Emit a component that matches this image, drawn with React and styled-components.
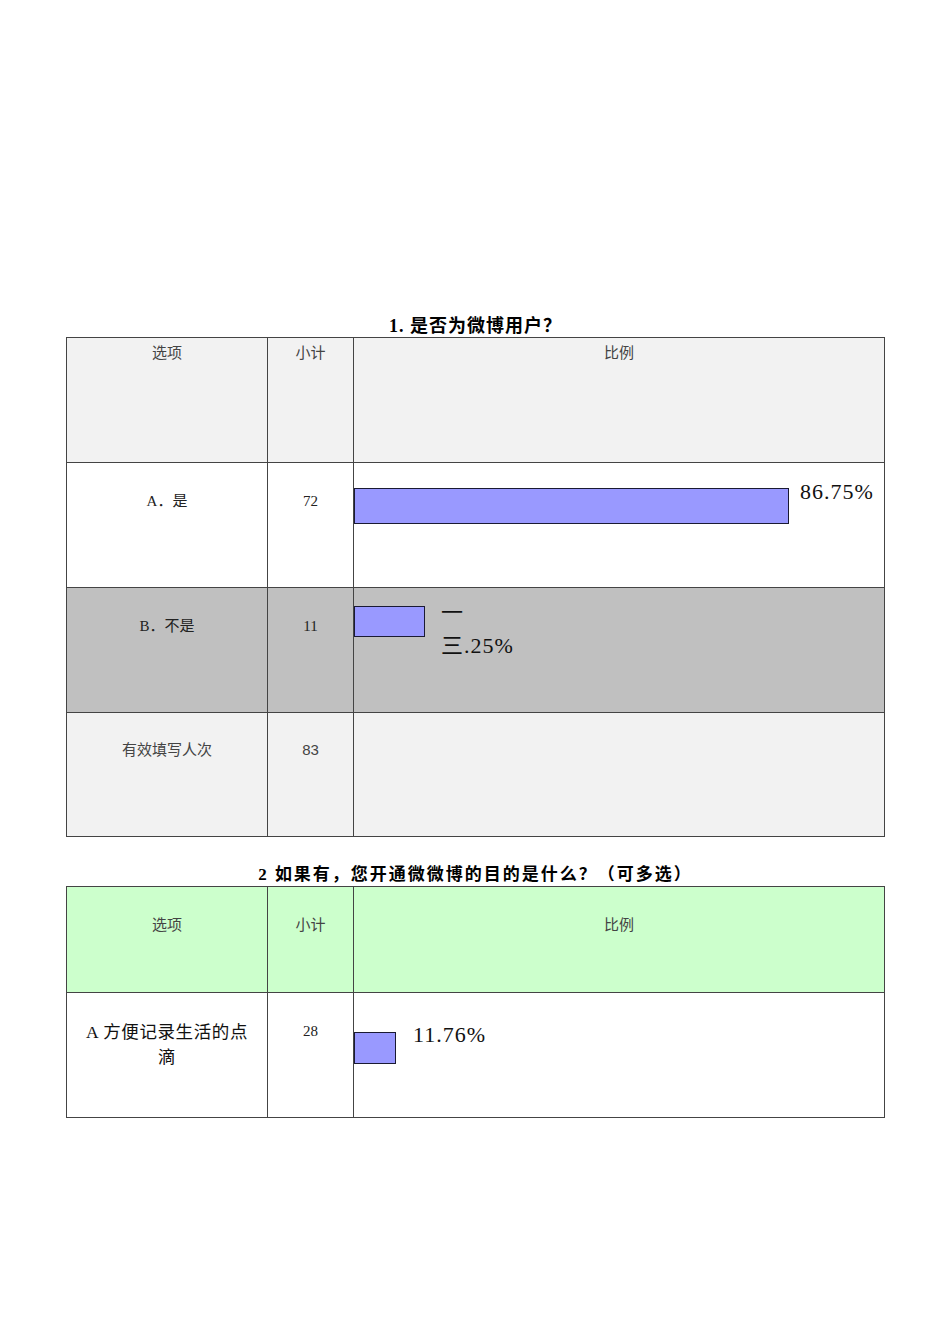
import React from 'react'
import styled, { createGlobalStyle } from 'styled-components'

const GlobalStyle = createGlobalStyle`
    body {
        margin: 0;
        background: #ffffff;
        font-family: 'Liberation Serif', 'Noto Sans CJK SC', serif;
        color: #000;
        text-spacing-trim: space-all;
    }
`

const q1 = [
    { label: 'A．是', count: '72', bg: '#ffffff', bar: 435, barH: 36, barTop: 25, gap: 11, pctTop: 12, pct: ['86.75%'] },
    { label: 'B．不是', count: '11', bg: '#c0c0c0', bar: 71, barH: 31, barTop: 18, gap: 16, pctTop: 8, pct: ['一', '三.25%'] },
]

const q2 = [
    { label: 'A 方便记录生活的点滴', big: true, count: '28', bg: '#ffffff', bar: 42, barH: 32, barTop: 39, gap: 17, pctTop: 25, pct: ['11.76%'] },
]

export default function App() {
    return (
        <Page>
            <GlobalStyle />
            <Title $size={18} $spacing={1}>1. 是否为微博用户？</Title>
            <Table>
                <colgroup>
                    <col style={{ width: 201 }} />
                    <col style={{ width: 86 }} />
                    <col />
                </colgroup>
                <tbody>
                    <Row $bg="#f2f2f2" $h={125}>
                        <HeadCell $pad={6}>选项</HeadCell>
                        <HeadCell $pad={6}>小计</HeadCell>
                        <HeadCell $pad={6}>比例</HeadCell>
                    </Row>
                    {q1.map((r) => (
                        <DataRow key={r.label} row={r} />
                    ))}
                    <Row $bg="#f2f2f2" $h={124}>
                        <HeadCell $pad={28}>有效填写人次</HeadCell>
                        <HeadCell $pad={28} $sans>83</HeadCell>
                        <Cell />
                    </Row>
                </tbody>
            </Table>

            <Title $size={17} $spacing={2} $gap={27}>2 如果有，您开通微微博的目的是什么？（可多选）</Title>
            <Table>
                <colgroup>
                    <col style={{ width: 201 }} />
                    <col style={{ width: 86 }} />
                    <col />
                </colgroup>
                <tbody>
                    <Row $bg="#ccffcc" $h={106}>
                        <HeadCell $pad={29}>选项</HeadCell>
                        <HeadCell $pad={29}>小计</HeadCell>
                        <HeadCell $pad={29}>比例</HeadCell>
                    </Row>
                    {q2.map((r) => (
                        <DataRow key={r.label} row={r} />
                    ))}
                </tbody>
            </Table>
        </Page>
    )
}

function DataRow({ row }) {
    return (
        <Row $bg={row.bg} $h={125}>
            <Cell $big={row.big}>{row.label}</Cell>
            <Cell>{row.count}</Cell>
            <BarCell>
                <BarWrap>
                    <Bar style={{ width: row.bar, height: row.barH, marginTop: row.barTop }} />
                    <Pct style={{ marginLeft: row.gap, marginTop: row.pctTop }}>
                        {row.pct.map((p) => (
                            <div key={p}>{p}</div>
                        ))}
                    </Pct>
                </BarWrap>
            </BarCell>
        </Row>
    )
}

const Page = styled.div`
    width: 819px;
    margin-left: 66px;
    padding-top: 315px;
    padding-bottom: 200px;
`

const Title = styled.div`
    margin-top: ${(p) => p.$gap || 0}px;
    text-align: center;
    font-weight: bold;
    font-size: ${(p) => p.$size}px;
    letter-spacing: ${(p) => p.$spacing || 0}px;
    line-height: 22px;
`

const Table = styled.table`
    width: 100%;
    border-collapse: collapse;
    table-layout: fixed;
    border: 1px solid #555;
`

const Row = styled.tr`
    background: ${(p) => p.$bg};
    height: ${(p) => p.$h}px;
`

const Cell = styled.td`
    border: 1px solid #444;
    vertical-align: top;
    text-align: center;
    padding: ${(p) => (p.$big ? '27px 14px 0' : '26px 12px 0')};
    font-size: ${(p) => (p.$big ? 17.5 : 15)}px;
    letter-spacing: ${(p) => (p.$big ? 0.6 : 0)}px;
    line-height: 25px;
    color: ${(p) => (p.$big ? '#111' : '#222')};
    font-family: ${(p) => (p.$sans ? "'Liberation Sans', 'Noto Sans CJK SC', sans-serif" : "'Liberation Serif', 'Noto Sans CJK SC', serif")};
`

const HeadCell = styled(Cell)`
    padding-top: ${(p) => p.$pad}px;
    color: #444;
    line-height: 18px;
`

const BarCell = styled.td`
    border: 1px solid #444;
    vertical-align: top;
    padding: 0;
`

const BarWrap = styled.div`
    display: flex;
    align-items: flex-start;
`

const Bar = styled.div`
    box-sizing: border-box;
    background: #9999ff;
    border: 1px solid #1a1a33;
    flex-shrink: 0;
`

const Pct = styled.div`
    font-family: 'Liberation Serif', 'Noto Sans CJK SC', serif;
    font-size: 22px;
    line-height: 33px;
    letter-spacing: 1px;
    color: #111;
`
